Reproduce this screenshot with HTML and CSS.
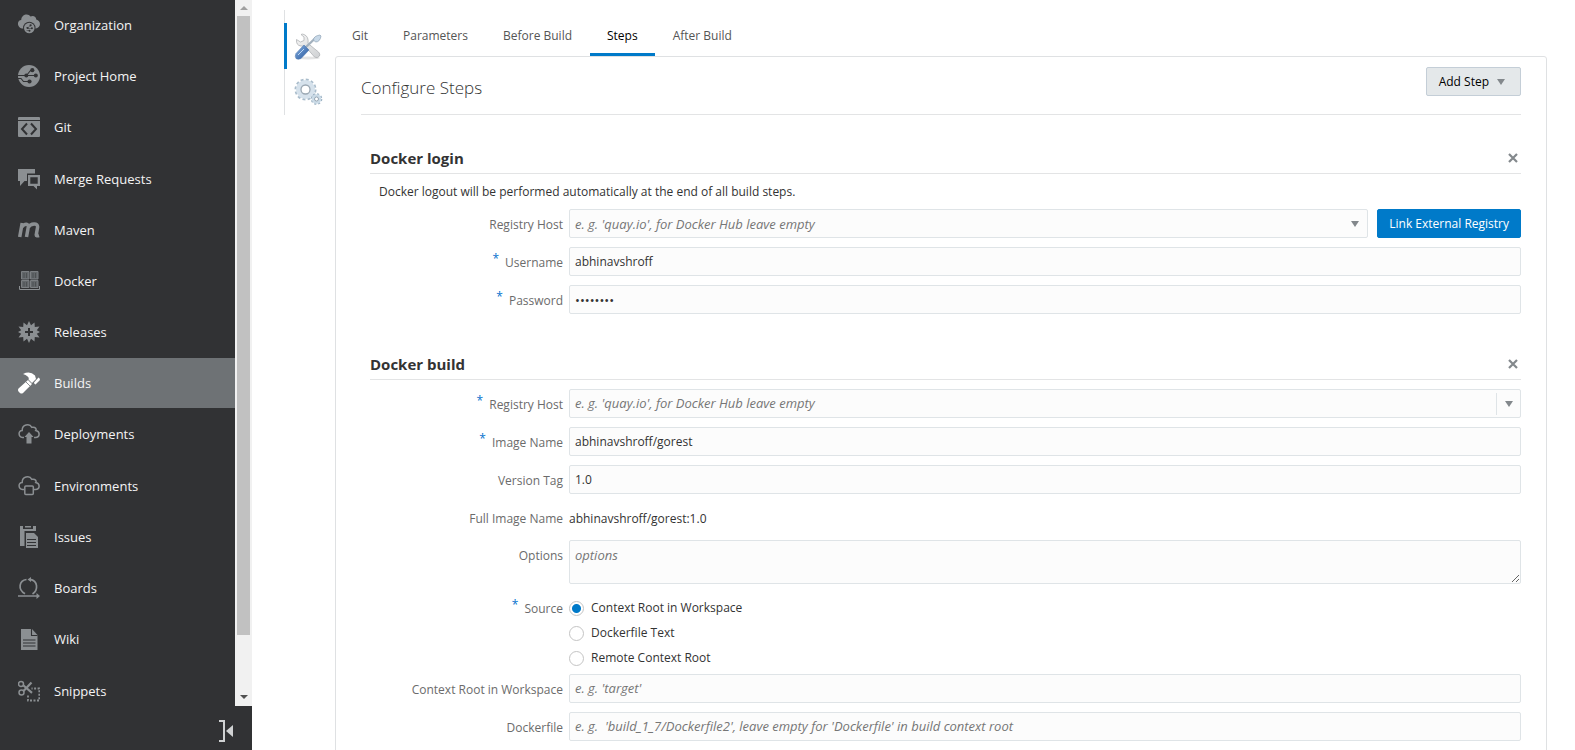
FILE: index.html
```html
<!DOCTYPE html>
<html lang="en">
<head>
<meta charset="utf-8">
<title>Configure Steps</title>
<link rel="stylesheet" href="styles.css">
</head>
<body>
<div class="app">
  <aside class="sidebar">
    <div class="sidebar-body">
      <nav class="nav">
        <div class="nav-group">
          <a class="nav-item" href="#"><svg class="nav-icon" viewBox="0 0 22 22"><path fill="#8b8f92" d="M4 14.500C-1 13.500-1.500 6.500 3.200 6C3.500 0 10.500-1 12.500 2.500C15.500 1 18.500 3 18.200 5.500C23 6.500 23.500 13.500 18 14.500Z"/><circle cx="11.300" cy="14" r="6.200" fill="#313234"/><circle cx="11.300" cy="14" r="5.300" fill="#8b8f92"/><path d="M8 13.800h2l2.500-2.600M9.500 14.500h4M8.500 16.500h3" stroke="#313234" stroke-width=".5" fill="none"/><g fill="#313234"><circle cx="12.600" cy="11.300" r="1.100"/><circle cx="13.900" cy="14.300" r="1"/><circle cx="9.700" cy="13.900" r="1"/><circle cx="11.500" cy="16.700" r="1"/></g></svg>Organization</a>
          <a class="nav-item" href="#"><svg class="nav-icon" viewBox="0 0 22 22"><circle cx="11" cy="11" r="11" fill="#8b8f92"/><path d="M0 10.500h8.500l4-5H14M8 10.500h9.500M0 13.500h3l2.500 3H11" stroke="#313234" stroke-width="1.100" fill="none"/><g fill="#313234"><circle cx="14.300" cy="5.200" r="2.100"/><circle cx="8.300" cy="10.600" r="2"/><circle cx="17.800" cy="10.600" r="2"/><circle cx="11.500" cy="16.500" r="2.100"/></g></svg>Project Home</a>
          <a class="nav-item" href="#"><svg class="nav-icon" viewBox="0 0 22 22"><rect y="1" width="22" height="20" rx="1" fill="#8b8f92"/><path d="M0 4.500h22" stroke="#313234"/><path d="M9 7.500l-5 5.500l5 5.500M13 7.500l5 5.500l-5 5.500" stroke="#313234" stroke-width="2" fill="none"/></svg>Git</a>
        </div>
        <div class="nav-group">
          <a class="nav-item" href="#"><svg class="nav-icon" viewBox="0 0 22 22"><path fill="#8b8f92" d="M0 1h17v4.500H9V13H6.500L2 18v-5H0z"/><path fill="#8b8f92" fill-rule="evenodd" d="M10 7h12v11h-3v3.500L15.500 18H10zM12.300 9.300v6.400h7.400V9.300z"/></svg>Merge Requests</a>
          <a class="nav-item" href="#"><svg class="nav-icon" viewBox="0 0 22 22"><path d="M1.700 18L4.200 4M3.800 8C6.500 4.200 11 4.200 10.200 8.500L8.500 18M10 8.500C12.500 4.200 20.500 3.200 19.500 8.800L18.300 15.500C18.100 17 19.500 17 21 16.500" fill="none" stroke="#8b8f92" stroke-width="3.500"/></svg>Maven</a>
          <a class="nav-item" href="#"><svg class="nav-icon" viewBox="0 0 22 22"><path d="M1.500 16v3.500h20V16" fill="none" stroke="#8b8f92"/><path d="M3.500 1.500h7.500v7.500H3.500zM12.500 1.500H20v7.500h-7.500zM3.500 10.500h7.500v7H3.500zM12.500 10.500H20v7h-7.500z" fill="#63676a" stroke="#7b7f82"/><path d="M6 3v5M8.500 3v5M15 3v5M17.500 3v5M6 12v4.500M8.500 12v4.500M15 12v4.500M17.500 12v4.500" stroke="#484b4e" stroke-width=".8"/></svg>Docker</a>
          <a class="nav-item" href="#"><svg class="nav-icon" viewBox="0 0 22 22"><path fill="#8b8f92" d="M11 0l2 4.300L16.500 1.500l.3 4.500 4.700-.5-2.700 3.800L22 11l-3.200 1.800 2.700 3.700-4.700-.4-.3 4.500-3.500-2.800L11 22l-2-4.200-3.500 2.800-.3-4.500-4.700.4 2.700-3.700L0 11l3.200-1.700L.5 5.500l4.700.5.300-4.500L9 4.300z"/><path d="M11 7v8M7 11h8" stroke="#313234" stroke-width="2"/></svg>Releases</a>
          <a class="nav-item nav-item-active" href="#"><svg class="nav-icon" viewBox="0 0 22 22"><path fill="#fff" d="M10 8l4 4-9 9q-1.500 1-3 0l-1.500-1.500q-1-1.500 0-3zM5 2q7-3.500 12 1.500l1 3.500-4 4-3.500-3.500q1.500-3-5.500-5.500zM20.500 5.500q1.500.8 1.500 2.500l-4.500 4.500q-1.500-.3-1.500-2z"/><path d="M7.500 9.500l5 5" stroke="#6e7275" stroke-width=".8"/></svg>Builds</a>
          <a class="nav-item" href="#"><svg class="nav-icon" viewBox="0 0 22 22"><path d="M6 14.500H4.500C0 14 0 7.500 4.200 7.500C4 1.500 11.500 0 13.800 4.300C18 3.500 18.500 6.500 17.800 7.500C22.500 8.500 22 14.500 17.500 14.500H16" fill="none" stroke="#8b8f92" stroke-width="1.500"/><path d="M11 9l4.500 5H13.500v6.500H8.500V14H6.500z" fill="#8b8f92"/></svg>Deployments</a>
        </div>
        <div class="nav-group">
          <a class="nav-item" href="#"><svg class="nav-icon" viewBox="0 0 22 22"><path d="M6 14.500H4.500C0 14 0 7.500 4.200 7.500C4 1.500 11.500 0 13.800 4.300C18 3.500 18.500 6.500 17.800 7.500C22.500 8.500 22 14.500 17.500 14.500H16" fill="none" stroke="#8b8f92" stroke-width="1.500"/><rect x="6.800" y="11" width="8.500" height="8.500" rx="1" fill="none" stroke="#8b8f92" stroke-width="1.500"/></svg>Environments</a>
          <a class="nav-item" href="#"><svg class="nav-icon" viewBox="0 0 22 22"><path d="M2 0h3v3h10V0h3v5H6.500v15H2z" fill="#8b8f92"/><path d="M7 0h6v1.500H7zM8 7h8l4 4v11H8z" fill="#8b8f92"/><path d="M9 13.500h9M9 16.500h9M9 19.500h9" stroke="#313234"/></svg>Issues</a>
          <a class="nav-item" href="#"><svg class="nav-icon" viewBox="0 0 22 22"><path d="M7 16.800C-.5 12.500 1 3.500 8.500 2.500M12 2.300C20 3.500 20.500 13 14.500 17M0 19h19" fill="none" stroke="#8b8f92" stroke-width="1.700"/><path d="M13 0v5l-3.500-2.500zM18.500 16l3.500 3-3.500 3z" fill="#8b8f92"/></svg>Boards</a>
          <a class="nav-item" href="#"><svg class="nav-icon" viewBox="0 0 22 22"><path d="M3 1h11l5.500 6v15H3z" fill="#8b8f92"/><path d="M13.500 1v6.500H19.500M5 12h12.500M5 15h12.500M5 18h12.500" stroke="#313234" stroke-width="1.100" fill="none"/></svg>Wiki</a>
        </div>
        <div class="nav-group">
          <a class="nav-item" href="#"><svg class="nav-icon" viewBox="0 0 22 22"><g fill="none" stroke="#8b8f92" stroke-width="1.500"><circle cx="3" cy="4" r="2.500"/><circle cx="3.500" cy="12.500" r="2.500"/><path d="M5.500 5.500l8.500 7.300M5.500 11L13.500 2.500" stroke-width="2.200"/><path d="M10 15.500v5h11.300V8.500H13.500" stroke-dasharray="2 1.500" stroke-width="1.800"/></g></svg>Snippets</a>
        </div>
      </nav>
      <div class="scrollbar"><span class="scroll-up"></span><span class="scroll-thumb"></span><span class="scroll-down"></span></div>
    </div>
    <footer class="sidebar-footer">
      <button class="collapse" aria-label="Collapse navigation"><svg width="14" height="22" viewBox="0 0 14 22"><path d="M0 1h5v20H0" fill="none" stroke="#d0d2d3" stroke-width="2"/><path d="M14 5v12L7 11z" fill="#d0d2d3"/></svg></button>
    </footer>
  </aside>

  <main class="main">
    <div class="rail">
      <button class="rail-item rail-item-active" aria-label="Configure"><svg width="30" height="30" viewBox="0 0 30 30">
        <defs><linearGradient id="steel" x2="1" y2="1"><stop stop-color="#f6f6f6"/><stop offset="1" stop-color="#cfd1d3"/></linearGradient><linearGradient id="handle" x2="1" y2="1"><stop stop-color="#8bb4e4"/><stop offset="1" stop-color="#23549b"/></linearGradient></defs>
        <ellipse cx="15" cy="27" rx="12" ry="1.500" fill="#e4e4e4"/>
        <path d="M8 3.500l3 2.500v3.500L7.500 11 3.500 8.500q-.5 6 4.500 6.500l4 0 9.500 11q3 2 5-1 1-2-1-4L15 12.500q1-7-4-9-1.500-.8-3 0z" fill="url(#steel)" stroke="#b0b3b5" stroke-width=".8"/>
        <path d="M12.500 16.500L22.500 7" stroke="#a3b1be" stroke-width="2.400"/><path d="M20.500 9q0-4 6.500-5l1 1q-1 6-5.500 6z" fill="#c8d9e8" stroke="#98abbd" stroke-width=".8"/>
        <path d="M11 14l5 5-8 8.500q-3 1.500-5 0-1.500-2 0-5z" fill="url(#handle)" stroke="#517bb2" stroke-width=".6"/><path d="M11 18l-6 6" stroke="#c0d9f5"/></svg></button>
      <button class="rail-item" aria-label="Settings"><svg width="30" height="30" viewBox="0 0 30 30">
        <circle cx="12.500" cy="12.500" r="9.500" fill="none" stroke="#a9bccb" stroke-width="3" stroke-dasharray="2.800 2.170"/><circle cx="12.500" cy="12.500" r="7" fill="#fff" stroke="#d6e2ec" stroke-width="5"/><circle cx="12.500" cy="12.500" r="4.500" fill="#fff" stroke="#9ba8b3" stroke-width="1.300"/>
        <circle cx="23.500" cy="22" r="4.800" fill="none" stroke="#9cb2c3" stroke-width="2" stroke-dasharray="2 1.770"/><circle cx="23.500" cy="22" r="3.300" fill="#fff" stroke="#cbdbe7" stroke-width="3"/><circle cx="23.500" cy="22" r="2" fill="#fff" stroke="#96a5b2"/></svg></button>
    </div>

    <div class="content">
      <nav class="tabs">
        <a class="tab" href="#">Git</a>
        <a class="tab" href="#">Parameters</a>
        <a class="tab" href="#">Before Build</a>
        <a class="tab tab-active" href="#">Steps</a>
        <a class="tab" href="#">After Build</a>
      </nav>

      <div class="panel">
        <header class="panel-header">
          <h1 class="panel-title">Configure Steps</h1>
          <button class="button">Add Step<span class="caret"></span></button>
        </header>

        <section class="step">
          <header class="step-header">
            <h2 class="step-title">Docker login</h2>
            <button class="close" aria-label="Remove Docker login"><svg width="10" height="10" viewBox="0 0 10 10"><path d="M1 1l8 8M9 1l-8 8" stroke="#83888c" stroke-width="2.200"/></svg></button>
          </header>
          <p class="note">Docker logout will be performed automatically at the end of all build steps.</p>
          <div class="form">
            <label class="label" for="login-host">Registry Host</label>
            <div class="with-button">
              <div class="combo">
                <select class="field placeholder" id="login-host"><option>e. g. 'quay.io', for Docker Hub leave empty</option></select>
                <span class="caret combo-caret"></span>
              </div>
              <button class="button button-primary">Link External Registry</button>
            </div>
            <label class="label" for="username"><span class="required">*</span>Username</label>
            <input class="field" id="username" type="text" value="abhinavshroff">
            <label class="label" for="password"><span class="required">*</span>Password</label>
            <input class="field field-password" id="password" type="password" value="password">
          </div>
        </section>

        <section class="step">
          <header class="step-header">
            <h2 class="step-title">Docker build</h2>
            <button class="close" aria-label="Remove Docker build"><svg width="10" height="10" viewBox="0 0 10 10"><path d="M1 1l8 8M9 1l-8 8" stroke="#83888c" stroke-width="2.200"/></svg></button>
          </header>
          <div class="form">
            <label class="label" for="build-host"><span class="required">*</span>Registry Host</label>
            <div class="combo">
              <input class="field" id="build-host" type="text" placeholder="e. g. 'quay.io', for Docker Hub leave empty">
              <button class="combo-toggle" aria-label="Show registries"><span class="caret"></span></button>
            </div>
            <label class="label" for="image-name"><span class="required">*</span>Image Name</label>
            <input class="field" id="image-name" type="text" value="abhinavshroff/gorest">
            <label class="label" for="version-tag">Version Tag</label>
            <input class="field" id="version-tag" type="text" value="1.0">
            <span class="label">Full Image Name</span>
            <output class="value">abhinavshroff/gorest:1.0</output>
            <label class="label" for="options">Options</label>
            <textarea class="field field-area" id="options" placeholder="options"></textarea>
            <span class="label" id="source-label"><span class="required">*</span>Source</span>
            <div class="radios" role="radiogroup" aria-labelledby="source-label">
              <label class="choice"><input class="radio" type="radio" name="source" checked>Context Root in Workspace</label>
              <label class="choice"><input class="radio" type="radio" name="source">Dockerfile Text</label>
              <label class="choice"><input class="radio" type="radio" name="source">Remote Context Root</label>
            </div>
            <label class="label" for="context-root">Context Root in Workspace</label>
            <input class="field" id="context-root" type="text" placeholder="e. g. 'target'">
            <label class="label" for="dockerfile">Dockerfile</label>
            <input class="field" id="dockerfile" type="text" placeholder="e. g.  'build_1_7/Dockerfile2', leave empty for 'Dockerfile' in build context root">
          </div>
        </section>
      </div>
    </div>
  </main>
</div>
</body>
</html>
```
FILE: styles.css
```css
* {
  box-sizing: border-box;
}

body {
  margin: 0;
  background: #fff;
  color: #333;
  font: 12px/20px "Open Sans", "Noto Sans", sans-serif;
}

button,
input,
select,
textarea {
  font: inherit;
  color: inherit;
}

.app {
  display: flex;
  height: 100vh;
  overflow: hidden;
}

/* Sidebar */
.sidebar {
  display: flex;
  flex: none;
  flex-direction: column;
  width: 252px;
  background: #313234;
  font-size: 13px;
}

.sidebar-body {
  display: flex;
  flex: 1;
  min-height: 0;
}

.nav {
  display: flex;
  flex: 1;
  flex-direction: column;
  gap: 2px;
  overflow: hidden;
}

.nav-group {
  display: flex;
  flex: none;
  flex-direction: column;
  gap: 1px;
}

.nav-item {
  display: flex;
  align-items: center;
  gap: 14px;
  height: 50px;
  padding-left: 18px;
  color: #f4f4f4;
  text-decoration: none;
}

.nav-item-active {
  background: #6e7275;
}

.nav-icon {
  width: 22px;
  height: 22px;
}

.scrollbar {
  display: flex;
  flex-direction: column;
  align-items: center;
  width: 17px;
  padding: 6px 0 7px;
  background: #f1f1f1;
}

.scroll-up,
.scroll-down {
  border: 4px solid transparent;
}

.scroll-up {
  border-top: 0;
  border-bottom-color: #a0a0a0;
}

.scroll-down {
  margin-top: auto;
  border-bottom: 0;
  border-top-color: #505050;
}

.scroll-thumb {
  width: 13px;
  height: calc(90% - 5px);
  margin-top: 6px;
  background: #c1c1c1;
}

.sidebar-footer {
  display: flex;
  justify-content: flex-end;
  align-items: center;
  height: 44px;
  padding: 6px 19px 0 0;
}

.collapse,
.rail-item,
.close,
.combo-toggle {
  display: flex;
  align-items: center;
  justify-content: center;
  padding: 0;
  border: 0;
  background: none;
}

/* Main area */
.main {
  display: flex;
  flex: 1;
  align-items: flex-start;
  min-width: 0;
  padding: 10px 28px 0 32px;
}

.rail {
  width: 51px;
  height: 105px;
  padding-top: 13px;
  background: linear-gradient(#dfe1e3, #dfe1e3) left / 1px 100% no-repeat;
}

.rail-item {
  width: 41px;
  height: 46px;
  padding-left: 4px;
  border-left: 3px solid transparent;
}

.rail-item-active {
  border-left-color: #007ac9;
}

.content {
  flex: 1;
  min-width: 0;
}

.tabs {
  display: flex;
  gap: 1px;
  height: 46px;
}

.tab {
  padding: 16px 17px 0;
  border-bottom: 3px solid transparent;
  color: #555;
  text-decoration: none;
}

.tab-active {
  border-color: #007ac9;
  color: #000;
}

.panel {
  padding: 10px 25px 24px;
  border: 1px solid #dfe1e3;
  border-radius: 3px;
}

.panel-header {
  display: flex;
  justify-content: space-between;
  align-items: flex-start;
  height: 48px;
  border-bottom: 1px solid #e3e4e5;
}

.panel-title {
  margin: 7px 0 0;
  font-size: 17px;
  font-weight: 300;
  line-height: 28px;
}

.button {
  display: flex;
  align-items: center;
  gap: 8px;
  height: 29px;
  padding: 1px 15px 0 12px;
  border: 1px solid #c4ced7;
  border-radius: 2px;
  background: #e4e8ea;
  color: #000;
  white-space: nowrap;
}

.button-primary {
  padding: 1px 11px 0;
  border-color: #007ac9;
  background: #007ac9;
  color: #fff;
}

.caret {
  border: 4px solid transparent;
  border-top: 6px solid #83888c;
  border-bottom: 0;
}

/* Build steps */
.step {
  margin: 27px 0 0 9px;
}

.step + .step {
  margin-top: 34px;
}

.step-header {
  display: flex;
  align-items: center;
  justify-content: space-between;
  height: 32px;
  border-bottom: 1px solid #e3e4e5;
}

.step-title {
  margin: 0;
  font-size: 15px;
  font-weight: 700;
}

.close {
  width: 16px;
  height: 16px;
}

.note {
  margin: 8px 9px -2px;
}

.form {
  display: grid;
  grid-template-columns: 193px 1fr;
  gap: 9px 6px;
  margin-top: 9px;
}

.label {
  padding-top: 6px;
  color: #6b6b6b;
  text-align: right;
  white-space: nowrap;
}

.required {
  margin-right: 6px;
  color: #0572ce;
  vertical-align: 4px;
  line-height: 1;
}

.field {
  display: block;
  width: 100%;
  height: 29px;
  margin: 0;
  padding: 0 5px;
  border: 1px solid #dfe4e7;
  border-radius: 2px;
  outline: 0;
  background: #fcfcfc;
  appearance: none;
}

.field-area {
  height: 44px;
  padding-top: 4px;
  resize: both;
}

.field-password {
  font-size: 13px;
}

.placeholder,
.field::placeholder {
  color: #767676;
  font-size: 13px;
  font-style: italic;
}

.with-button {
  display: grid;
  grid-template-columns: 1fr auto;
  gap: 9px;
}

.combo {
  position: relative;
}

.combo-caret {
  position: absolute;
  top: 12px;
  right: 9px;
}

.combo-toggle {
  position: absolute;
  top: 4px;
  right: 1px;
  width: 24px;
  height: 22px;
  border-left: 1px solid #dfe4e7;
}

.value {
  height: 28px;
  padding-top: 6px;
}

.radios {
  display: grid;
  gap: 5px;
  margin-bottom: -3px;
  padding-top: 5px;
}

.choice {
  display: flex;
  align-items: center;
  gap: 7px;
}

.radio {
  width: 15px;
  height: 15px;
  margin: 0;
  border: 1px solid #c4c4c4;
  border-radius: 50%;
  background: #fff;
  appearance: none;
}

.radio:checked {
  background: radial-gradient(circle, #007ac9 4px, #fff 5px);
}
```
